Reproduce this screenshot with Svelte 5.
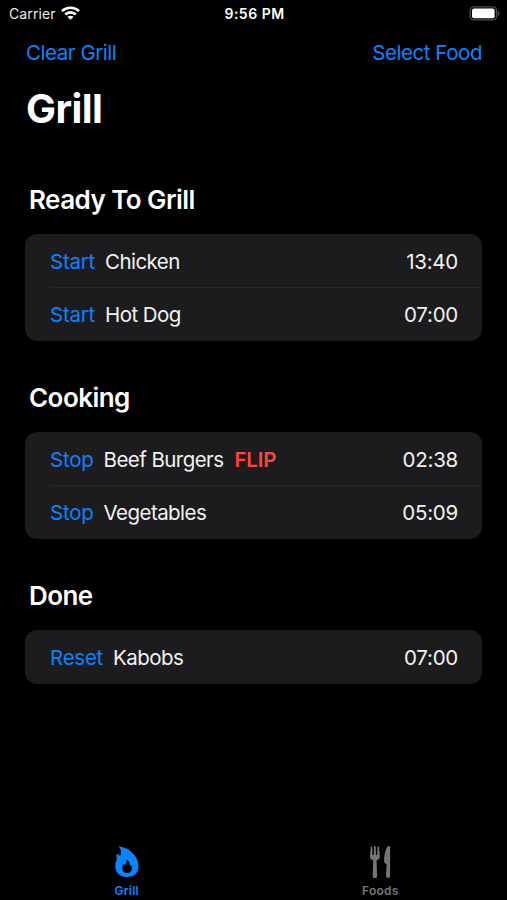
<script lang="ts">
  type Food = { action: string; name: string; time: string; flip?: boolean };

  const sections: { title: string; foods: Food[] }[] = [
    {
      title: 'Ready To Grill',
      foods: [
        { action: 'Start', name: 'Chicken', time: '13:40' },
        { action: 'Start', name: 'Hot Dog', time: '07:00' },
      ],
    },
    {
      title: 'Cooking',
      foods: [
        { action: 'Stop', name: 'Beef Burgers', time: '02:38', flip: true },
        { action: 'Stop', name: 'Vegetables', time: '05:09' },
      ],
    },
    {
      title: 'Done',
      foods: [{ action: 'Reset', name: 'Kabobs', time: '07:00' }],
    },
  ];
</script>

<div class="screen">
  <header class="status">
    <div class="carrier">
      <span>Carrier</span>
      <svg width="19" height="14" viewBox="0 0 19 14">
        <g fill="none" stroke="#fff" stroke-width="2.6">
          <path d="M1 5.1C5.6.6 13.4.6 18 5.1" />
          <path d="M4.2 8.5c3-2.900 7.600-2.900 10.600 0" />
        </g>
        <path d="M6.500 10.900c1.800-1.500 4.200-1.500 6 0l-3 2.900z" fill="#fff" />
      </svg>
    </div>
    <span class="clock">9:56 PM</span>
    <svg class="battery" width="31" height="15" viewBox="0 0 31 15">
      <rect x="1.2" y=".9" width="26.4" height="13" rx="3.8" fill="none" stroke="#4d4d4f" stroke-width="1.3" />
      <rect x="3" y="2.6" width="22.6" height="9.6" rx="2" fill="#fff" />
      <path d="M28.8 5.2c2.2.7 2.2 4 0 4.7z" fill="#4d4d4f" />
    </svg>
  </header>

  <nav>
    <button>Clear Grill</button>
    <button>Select Food</button>
  </nav>

  <h1>Grill</h1>

  <main>
    {#each sections as section}
      <section>
        <h2>{section.title}</h2>
        <ul>
          {#each section.foods as food}
            <li>
              <button class="action">{food.action}</button>
              <span class="name">{food.name}</span>
              {#if food.flip}
                <strong>FLIP</strong>
              {/if}
              <time>{food.time}</time>
            </li>
          {/each}
        </ul>
      </section>
    {/each}
  </main>

  <footer>
    <button class="tab active">
      <svg width="26" height="34" viewBox="0 0 26 34">
        <path
          fill="currentColor"
          fill-rule="evenodd"
          d="M4.500 1.300C12 2.300 18.300 6.500 21.500 11.600c2 3 3 6.200 3 9.900C24.500 28 19.800 32 13 32 6 32 1.300 27.600 1.300 21.500c0-3.200.7-5.500 1.800-7.300-.8-1.500-.9-3.300-.3-5.600 1 1.200 2.100 1.800 3.700 1.800C7.700 7.200 7 4 4.500 1.300zM12.400 14.400c.7 2.700-.3 4.300-1.600 5.800-.5-.4-.8-.9-1-1.500-1.200 1.600-1.700 3.100-1.500 4.900.2 2.900 2.200 4.600 4.900 4.600s4.700-1.800 4.700-4.700c0-1.500-.4-2.700-1.200-3.700 0 .6-.2 1-.6 1.300.1-2.900-1.200-5.300-3.700-6.700z"
        />
      </svg>
      <span>Grill</span>
    </button>
    <button class="tab">
      <svg width="26" height="34" viewBox="0 0 26 34">
        <path
          fill="currentColor"
          d="M3.700 1.400h1.500l.3 8.600h1.200l.3-9h1.700l.3 9h1.200l.3-8.600H12l.8 9.500c.1 2.400-1 3.600-3.200 4.300l.5 15.700c0 1.500-.8 2.200-2.200 2.200s-2.200-.7-2.200-2.200l.5-15.700c-2.200-.7-3.300-1.900-3.200-4.300zM21.900 1c.8 0 1.200.5 1.200 1.400v28.400c0 1.500-.7 2.200-2 2.200-1.400 0-2.100-.7-2.100-2.200l.6-11.500c-1.900-.8-2.600-1.800-2.500-4 .2-6.100 2-14.300 4.800-14.300z"
        />
      </svg>
      <span>Foods</span>
    </button>
  </footer>
</div>

<style>
  :global(body) {
    background: #000;
  }

  .screen {
    display: flex;
    flex-direction: column;
    width: 507px;
    height: 900px;
    overflow: hidden;
    background: #000;
    color: #fff;
    font-family: Inter, 'Liberation Sans', sans-serif;
    font-size: 20.5px;
  }

  button {
    padding: 0;
    border: 0;
    background: none;
    color: #0a84ff;
    font: inherit;
    letter-spacing: inherit;
  }

  .status {
    display: grid;
    grid-template-columns: 1fr auto 1fr;
    align-items: center;
    height: 27px;
    padding: 0 7px 0 9px;
    font-size: 14px;
  }

  .carrier {
    display: flex;
    align-items: center;
    gap: 5.5px;
    color: #e8e8e8;
    letter-spacing: 0.1px;
  }

  .carrier svg {
    margin-bottom: 2px;
  }

  .clock {
    font-weight: 600;
    font-size: 14px;
    letter-spacing: 0.5px;
  }

  .battery {
    justify-self: end;
  }

  nav {
    display: flex;
    justify-content: space-between;
    align-items: center;
    height: 50px;
    padding: 0 25px 0 26px;
    letter-spacing: -0.45px;
  }

  h1 {
    height: 60px;
    margin: 2px 0 0 26px;
    font-size: 40px;
    line-height: 60px;
    letter-spacing: -0.6px;
  }

  main {
    flex: 1;
    padding: 35px 25px 0;
  }

  h2 {
    height: 60px;
    margin: 0 0 0 4px;
    font-size: 26px;
    font-weight: 600;
    line-height: 52px;
    letter-spacing: -0.55px;
  }

  ul {
    margin: 0 0 31px;
    padding: 0;
    border-radius: 12px;
    background: #1c1c1e;
    list-style: none;
  }

  li {
    display: flex;
    align-items: center;
    height: 54px;
    margin-left: 25px;
    padding: 0 24px 0 0;
    box-sizing: border-box;
    letter-spacing: -0.25px;
  }

  li:not(:last-child) {
    height: 53px;
    padding-top: 1px;
  }

  li + li {
    border-top: 1px solid #29292b;
  }

  .name {
    margin-left: 10px;
    color: #f2f2f2;
    letter-spacing: -0.55px;
  }

  strong {
    margin-left: 11px;
    color: #ff453a;
    font-weight: 600;
  }

  time {
    margin-left: auto;
    color: #f2f2f2;
  }

  footer {
    display: flex;
    height: 55px;
  }

  .tab {
    display: flex;
    flex: 1;
    flex-direction: column;
    align-items: center;
    gap: 4px;
    color: #757575;
    font-size: 12px;
    font-weight: 600;
    line-height: 16px;
    letter-spacing: 0.2px;
  }

  .tab.active {
    color: #0a84ff;
  }
</style>
